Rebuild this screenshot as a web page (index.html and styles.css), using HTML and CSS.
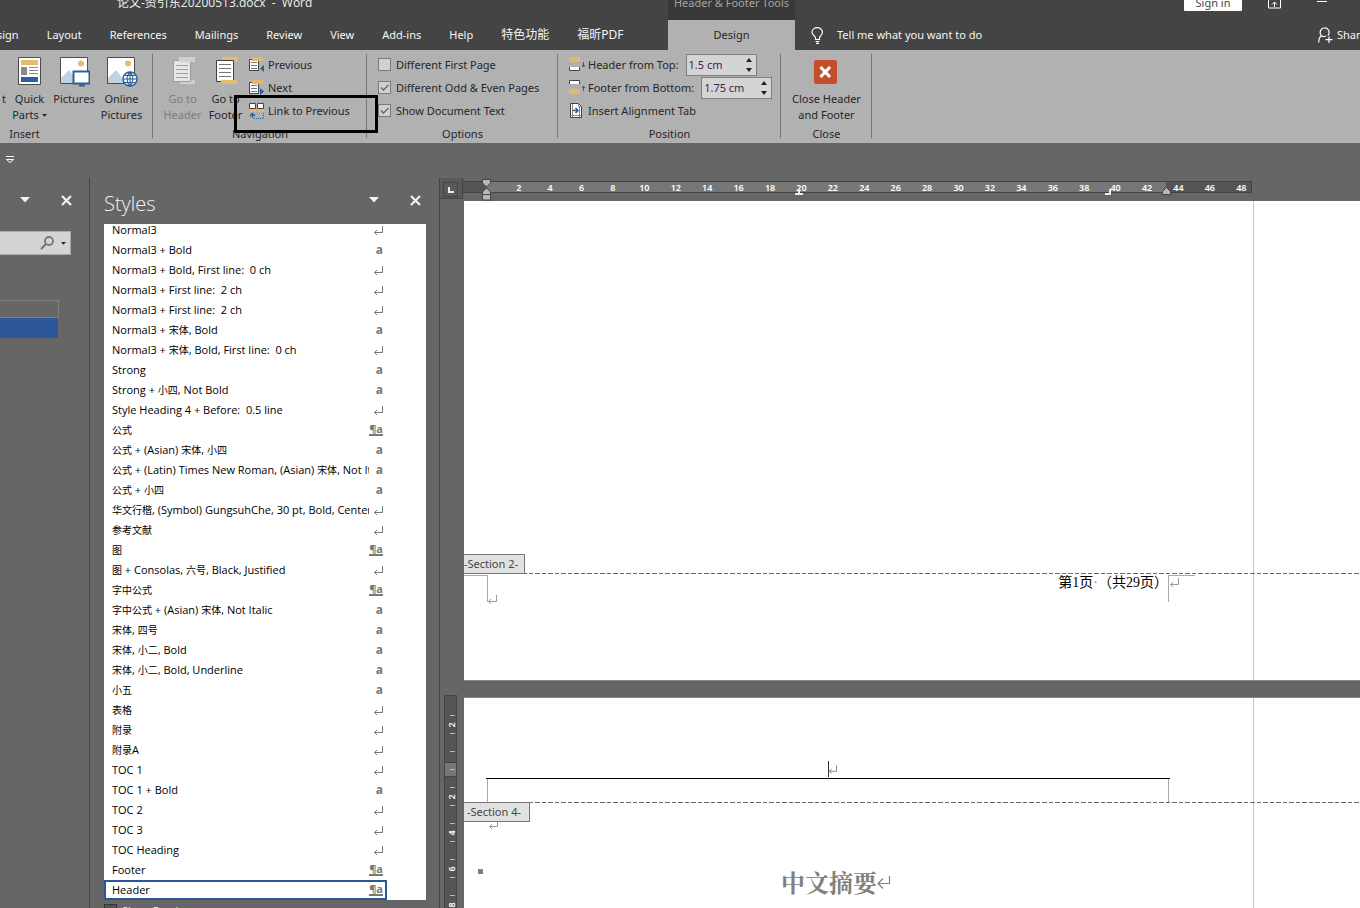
FILE: index.html
```
<!DOCTYPE html>
<html lang="en">
<head>
<meta charset="utf-8">
<title>论文-资引东20200513.docx - Word</title>
<link rel="stylesheet" href="styles.css">
</head>
<body>
<svg class="defs" aria-hidden="true">
  <symbol id="ret" viewBox="0 0 10 9"><path d="M9.500 0v6.500H1.500M4 4L1.500 6.500L4 9" fill="none" stroke="currentColor"/></symbol>
  <symbol id="down" viewBox="0 0 10 6"><path d="M0 0h10L5 5.500z" fill="currentColor"/></symbol>
  <symbol id="cross" viewBox="0 0 11 11"><path d="M1 1l9 9M10 1l-9 9" fill="none" stroke="currentColor" stroke-width="2.200"/></symbol>
</svg>

<header class="titlebar">
  <div class="doc-title">论文-资引东20200513.docx&nbsp; -&nbsp; Word</div>
  <div class="tools-title">Header &amp; Footer Tools</div>
  <div class="window-controls">
    <button class="sign-in">Sign in</button>
    <button class="win-btn" aria-label="Ribbon display options"><svg width="14" height="12" viewBox="0 0 14 12"><path d="M.5.5h12v10.500H.5zM.5 2.500h12M6.500 10V5M4 7.500L6.500 5L9 7.500" fill="none" stroke="#fff"/></svg></button>
    <button class="win-btn" aria-label="Minimize"><svg width="10" height="6" viewBox="0 0 10 6"><path d="M0 1.500h10" stroke="#fff"/></svg></button>
  </div>
</header>

<nav class="tabs">
  <button class="tab tab-cut">sign</button>
  <button class="tab">Layout</button>
  <button class="tab">References</button>
  <button class="tab">Mailings</button>
  <button class="tab">Review</button>
  <button class="tab">View</button>
  <button class="tab">Add-ins</button>
  <button class="tab">Help</button>
  <button class="tab tab-zh">特色功能</button>
  <button class="tab tab-zh">福昕PDF</button>
  <button class="tab tab-active">Design</button>
  <button class="tell-me"><svg width="13" height="17" viewBox="0 0 13 17"><path d="M4.500 12.500V11C4.500 9 1 8 1 5.200C1 2.500 3.500.7 6.200.7S11.500 2.500 11.500 5.200C11.500 8 8.500 9 8.500 11v1.500zM4.500 14.500h4M5 16.300h3" fill="none" stroke="#fff" stroke-width="1.200"/></svg>Tell me what you want to do</button>
  <button class="share"><svg width="15" height="17" viewBox="0 0 15 17"><path d="M6.500 1a4 4.500 0 0 0-3 7.800C1.500 10 .8 12 .8 15.500M3.500 8.800c1.500 1 3.500 1 5-.2M6.500 1a4 4.500 0 0 1 3.500 7.500M11 9.500v6.500M7.500 12.700h7" fill="none" stroke="#fff" stroke-width="1.200"/></svg>Share</button>
</nav>

<section class="ribbon">
  <div class="group group-insert">
    <div class="group-body">
      <button class="big cut-btn">t</button>
      <button class="big quick"><svg width="32" height="32" viewBox="0 0 32 32"><path d="M4.500 2.500h22v27h-22z" fill="#fff" stroke="#4d4d4d"/><path d="M7 5h17v5H7z" fill="#e5bb6c"/><path d="M7 12h6v8H7z" fill="#8a8a8a"/><path d="M15 12.500h9M15 15.500h9M15 18.500h9" stroke="#8a8a8a"/><path d="M7 22h17v5H7z" fill="#2a6099"/></svg><span>Quick</span><span class="with-arrow">Parts<svg width="5" height="3" viewBox="0 0 10 6"><use href="#down"/></svg></span></button>
      <button class="big pics"><svg width="32" height="32" viewBox="0 0 32 32"><path d="M2.500 2.500h27v26h-27z" fill="#fff" stroke="#4d4d4d"/><path d="M3 28V23l8-8 10 13z" fill="#bfd2e8"/><circle cx="23" cy="8.500" r="3" fill="#e5bb6c"/><path d="M15.500 16.500h16v12h-16z" fill="#fff" stroke="#2a6099" stroke-width="2"/><path d="M21 30.500h6M24 28v3" stroke="#2a6099" stroke-width="2"/></svg><span>Pictures</span></button>
      <button class="big online"><svg width="32" height="32" viewBox="0 0 32 32"><path d="M1.500 2.500h27v26h-27z" fill="#fff" stroke="#4d4d4d"/><path d="M2 28V23l8-8 10 13z" fill="#bfd2e8"/><circle cx="22" cy="8.500" r="3" fill="#e5bb6c"/><circle cx="24" cy="24" r="7" fill="#fff" stroke="#2a6099" stroke-width="1.500"/><path d="M17 24h14M18 20.500h12M18 27.500h12M24 17v14M24 17c-4 4-4 10 0 14M24 17c4 4 4 10 0 14" fill="none" stroke="#2a6099" stroke-width="1.100"/></svg><span>Online</span><span>Pictures</span></button>
    </div>
    <div class="group-name">Insert</div>
  </div>

  <div class="group group-nav">
    <div class="group-body">
      <button class="big goto" disabled><svg width="32" height="32" viewBox="0 0 32 32"><path d="M13 25h15v4H13z" fill="#cfcfcf"/><path d="M6.500 5.500h17v21h-17z" fill="#e6e6e6" stroke="#9c9c9c"/><path d="M12 2h16v5H12z" fill="#cfcfcf"/><path d="M9 10.500h12M9 14.500h12M9 18.500h12M9 22.500h12" stroke="#a0a0a0"/></svg><span>Go to</span><span>Header</span></button>
      <button class="big goto"><svg width="32" height="32" viewBox="0 0 32 32"><path d="M12 2h16v5H12z" fill="#e5bb6c"/><path d="M6.500 5.500h17v21h-17z" fill="#fff" stroke="#3f3f3f"/><path d="M9 9.500h12M9 13.500h12M9 17.500h12M9 21.500h12" stroke="#777"/><path d="M11 25h16v4H11z" fill="#e5bb6c"/></svg><span>Go to</span><span>Footer</span></button>
      <div class="stack">
        <button class="small"><svg width="16" height="16" viewBox="0 0 16 16"><path d="M.5 2.500h9v11h-9z" fill="#fff" stroke="#444"/><path d="M2 5.500h6M2 8.500h6M2 11.500h6" stroke="#777"/><path d="M3 0h11v4H3z" fill="#e5b76b"/><path d="M15 8v7l-4-3.500z" fill="#2a6099"/></svg>Previous</button>
        <button class="small"><svg width="16" height="16" viewBox="0 0 16 16"><path d="M.5 2.500h9v11h-9z" fill="#fff" stroke="#444"/><path d="M2 5.500h6M2 8.500h6M2 11.500h6" stroke="#777"/><path d="M3 0h11v4H3z" fill="#e5b76b"/><path d="M11 8v7l4-3.500z" fill="#2a6099"/></svg>Next</button>
        <button class="small"><svg width="16" height="16" viewBox="0 0 16 16"><path d="M.5.5h6v5h-6zM8.500.5h6v5h-6z" fill="#fff" stroke="#444"/><path d="M0 6h7v3H0zM8 6h7v3H8z" fill="#e5b76b"/><path d="M3.500 15v-4M1 13l2.500-2.500L6 13" fill="none" stroke="#2a6099" stroke-width="1.400"/><path d="M5 15.500h9.500V10" fill="none" stroke="#2a6099" stroke-dasharray="1 1"/></svg>Link to Previous</button>
      </div>
    </div>
    <div class="group-name">Navigation</div>
    <div class="highlight"></div>
  </div>

  <div class="group group-options">
    <div class="group-body stack">
      <label class="small"><input type="checkbox">Different First Page</label>
      <label class="small"><input type="checkbox" checked>Different Odd &amp; Even Pages</label>
      <label class="small"><input type="checkbox" checked>Show Document Text</label>
    </div>
    <div class="group-name">Options</div>
  </div>

  <div class="group group-position">
    <div class="group-body stack">
      <div class="small"><svg width="16" height="16" viewBox="0 0 16 16"><path d="M0 0h11v5H0z" fill="#e5b76b"/><path d="M0 6.500h11M0 8.500h11" stroke="#d0a860" stroke-dasharray="1 1"/><path d="M.5 10v3.500h10V10" fill="#fff" stroke="#444"/><path d="M14.500 5v5M13 8l1.500 2L16 8" fill="none" stroke="#2a6099"/></svg><label for="top">Header from Top:</label>
        <span class="spin"><input id="top" type="text" value="1.5 cm"><svg width="6" height="14" viewBox="0 0 6 14"><path d="M0 4h6L3 0zM0 10h6L3 14z" fill="#222"/></svg></span></div>
      <div class="small"><svg width="16" height="16" viewBox="0 0 16 16"><path d="M.5 4V.5h10V4" fill="#fff" stroke="#444"/><path d="M0 5.500h11M0 7.500h11" stroke="#d0a860" stroke-dasharray="1 1"/><path d="M0 9h11v5H0z" fill="#e5b76b"/><path d="M14.500 11V6M13 8l1.500-2L16 8" fill="none" stroke="#2a6099"/></svg><label for="bottom">Footer from Bottom:</label>
        <span class="spin"><input id="bottom" type="text" value="1.75 cm"><svg width="6" height="14" viewBox="0 0 6 14"><path d="M0 4h6L3 0zM0 10h6L3 14z" fill="#222"/></svg></span></div>
      <button class="small"><svg width="16" height="16" viewBox="0 0 16 16"><path d="M1.500.5h8l3 3v11h-11z" fill="#fff" stroke="#444"/><path d="M9.500.5v3h3M3.500 1v13M10.500 4v10M2 12.500h10" fill="none" stroke="#888"/><path d="M4 7.500h5M6.500 5l2.500 2.500L6.500 10" fill="none" stroke="#2a6099" stroke-width="1.600"/></svg>Insert Alignment Tab</button>
    </div>
    <div class="group-name">Position</div>
  </div>

  <div class="group group-close">
    <div class="group-body">
      <button class="big close-hf"><svg width="32" height="32" viewBox="0 0 32 32"><rect x="3" y="5" width="23" height="24" rx="2" fill="#c44d2d"/><path d="M9.500 12l9.500 10M19 12l-9.500 10" stroke="#fff" stroke-width="3.200"/></svg><span>Close Header</span><span>and Footer</span></button>
    </div>
    <div class="group-name">Close</div>
  </div>
</section>

<div class="quick-access"><button aria-label="Customize"><svg width="8" height="8" viewBox="0 0 8 8"><path d="M0 .5h8M.5 3.500L4 6.500l3.500-3H.5" fill="none" stroke="#fff"/></svg></button></div>

<main class="workspace">
  <aside class="nav-pane">
    <div class="pane-head">
      <button aria-label="Options"><svg width="10" height="6"><use href="#down"/></svg></button>
      <button aria-label="Close"><svg width="11" height="11"><use href="#cross"/></svg></button>
    </div>
    <div class="search"><input type="text" aria-label="Search document">
      <svg width="15" height="14" viewBox="0 0 15 14"><circle cx="9" cy="5" r="4" fill="none" stroke="#777" stroke-width="1.800"/><path d="M6 8L1 13" stroke="#777" stroke-width="2.200"/></svg>
      <svg class="tiny" width="5" height="3"><use href="#down"/></svg></div>
    <div class="nav-row"></div>
    <div class="nav-row nav-selected"></div>
  </aside>

  <aside class="styles-pane">
    <div class="pane-head">
      <h2>Styles</h2>
      <button aria-label="Options"><svg width="10" height="6"><use href="#down"/></svg></button>
      <button aria-label="Close"><svg width="11" height="11"><use href="#cross"/></svg></button>
    </div>
    <div class="list-box">
      <ul class="list">
        <li><span class="name">Normal3</span><svg class="ret"><use href="#ret"/></svg></li>
        <li><span class="name">Normal3 + Bold</span><b>a</b></li>
        <li><span class="name">Normal3 + Bold, First line:  0 ch</span><svg class="ret"><use href="#ret"/></svg></li>
        <li><span class="name">Normal3 + First line:  2 ch</span><svg class="ret"><use href="#ret"/></svg></li>
        <li><span class="name">Normal3 + First line:  2 ch</span><svg class="ret"><use href="#ret"/></svg></li>
        <li><span class="name">Normal3 + <span class="zh">宋体</span>, Bold</span><b>a</b></li>
        <li><span class="name">Normal3 + <span class="zh">宋体</span>, Bold, First line:  0 ch</span><svg class="ret"><use href="#ret"/></svg></li>
        <li><span class="name">Strong</span><b>a</b></li>
        <li><span class="name">Strong + <span class="zh">小四</span>, Not Bold</span><b>a</b></li>
        <li><span class="name">Style Heading 4 + Before:  0.5 line</span><svg class="ret"><use href="#ret"/></svg></li>
        <li><span class="name"><span class="zh">公式</span></span><b class="linked">¶a</b></li>
        <li><span class="name"><span class="zh">公式</span> + (Asian) <span class="zh">宋体</span>, <span class="zh">小四</span></span><b>a</b></li>
        <li><span class="name"><span class="zh">公式</span> + (Latin) Times New Roman, (Asian) <span class="zh">宋体</span>, Not Ita</span><b>a</b></li>
        <li><span class="name"><span class="zh">公式</span> + <span class="zh">小四</span></span><b>a</b></li>
        <li><span class="name"><span class="zh">华文行楷</span>, (Symbol) GungsuhChe, 30 pt, Bold, Centered</span><svg class="ret"><use href="#ret"/></svg></li>
        <li><span class="name"><span class="zh">参考文献</span></span><svg class="ret"><use href="#ret"/></svg></li>
        <li><span class="name"><span class="zh">图</span></span><b class="linked">¶a</b></li>
        <li><span class="name"><span class="zh">图</span> + Consolas, <span class="zh">六号</span>, Black, Justified</span><svg class="ret"><use href="#ret"/></svg></li>
        <li><span class="name"><span class="zh">字中公式</span></span><b class="linked">¶a</b></li>
        <li><span class="name"><span class="zh">字中公式</span> + (Asian) <span class="zh">宋体</span>, Not Italic</span><b>a</b></li>
        <li><span class="name"><span class="zh">宋体</span>, <span class="zh">四号</span></span><b>a</b></li>
        <li><span class="name"><span class="zh">宋体</span>, <span class="zh">小二</span>, Bold</span><b>a</b></li>
        <li><span class="name"><span class="zh">宋体</span>, <span class="zh">小二</span>, Bold, Underline</span><b>a</b></li>
        <li><span class="name"><span class="zh">小五</span></span><b>a</b></li>
        <li><span class="name"><span class="zh">表格</span></span><svg class="ret"><use href="#ret"/></svg></li>
        <li><span class="name"><span class="zh">附录</span></span><svg class="ret"><use href="#ret"/></svg></li>
        <li><span class="name"><span class="zh">附录</span>A</span><svg class="ret"><use href="#ret"/></svg></li>
        <li><span class="name">TOC 1</span><svg class="ret"><use href="#ret"/></svg></li>
        <li><span class="name">TOC 1 + Bold</span><b>a</b></li>
        <li><span class="name">TOC 2</span><svg class="ret"><use href="#ret"/></svg></li>
        <li><span class="name">TOC 3</span><svg class="ret"><use href="#ret"/></svg></li>
        <li><span class="name">TOC Heading</span><svg class="ret"><use href="#ret"/></svg></li>
        <li><span class="name">Footer</span><b class="linked">¶a</b></li>
        <li class="selected"><span class="name">Header</span><b class="linked">¶a</b></li>
      </ul>
    </div>
    <label class="preview"><input type="checkbox">Show Preview</label>
  </aside>

  <section class="document">
    <div class="ruler-row">
      <button class="tab-kind" aria-label="Tab type"><svg width="15" height="15" viewBox="0 0 15 15"><path d="M.5.5h14v14H.5z" fill="none" stroke="#444"/><path d="M6 5v5h5" fill="none" stroke="#e8e8e8" stroke-width="2"/></svg></button>
      <div class="ruler">
        <ol class="scale">
          <li>2</li><li>4</li><li>6</li><li>8</li><li>10</li><li>12</li><li>14</li><li>16</li><li>18</li><li>20</li><li>22</li><li>24</li><li>26</li><li>28</li><li>30</li><li>32</li><li>34</li><li>36</li><li>38</li><li>40</li><li>42</li><li>44</li><li>46</li><li>48</li>
        </ol>
        <svg class="mark mark-left" width="9" height="22" viewBox="0 0 9 22"><path d="M.5.5h8v3.500l-4 4-4-4zM4.500 9l4 4v2.500h-8V13zM.5 15.500h8v5.500h-8z" fill="#b8b8b8" stroke="#444"/></svg>
        <svg class="mark mark-center" width="8" height="6" viewBox="0 0 8 6"><path d="M0 5h8M4 0v5" stroke="#eee" stroke-width="2"/></svg>
        <svg class="mark mark-tab" width="6" height="6" viewBox="0 0 6 6"><path d="M0 5h5V0" fill="none" stroke="#eee" stroke-width="2"/></svg>
        <svg class="mark mark-right" width="9" height="8" viewBox="0 0 9 8"><path d="M4.500.5l4 4v3h-8v-3z" fill="#b8b8b8" stroke="#444"/></svg>
      </div>
    </div>
    <div class="canvas">
      <div class="v-ruler"><svg width="13" height="240" viewBox="0 0 13 240"><path d="M0 0h13v240H0z" fill="#555"/><path d="M.5 240V.5h12V240" fill="none" stroke="#444"/><path d="M.5 67.500h12v14H.5z" fill="#777" stroke="#444"/><path d="M6 20.500h5M6 38.500h5M6 56.500h5M6 74.500h5M6 92.500h5M6 110.500h5M6 128.500h5M6 146.500h5M6 164.500h5M6 182.500h5M6 200.500h5" stroke="#bbb"/>
        <g class="v-num"><text transform="translate(11 30) rotate(-90)">2</text><text transform="translate(11 102) rotate(-90)">2</text><text transform="translate(11 138) rotate(-90)">4</text><text transform="translate(11 174) rotate(-90)">6</text><text transform="translate(11 210) rotate(-90)">8</text></g></svg></div>
      <div class="pages">
        <article class="page page-first">
          <footer class="page-footer">
            <span class="section-tag tag-footer">-Section 2-</span>
            <span class="corner corner-left"><svg class="ret"><use href="#ret"/></svg></span>
            <p>第1页<span class="dot">·</span>（共29页）</p>
            <span class="corner corner-right"><svg class="ret"><use href="#ret"/></svg></span>
          </footer>
        </article>
        <article class="page page-second">
          <div class="page-header"><div class="header-line"><span class="caret"><svg class="ret"><use href="#ret"/></svg></span></div><div class="header-base"></div></div>
          <div class="page-body">
            <span class="section-tag tag-header">-Section 4-</span>
            <svg class="ret"><use href="#ret"/></svg>
            <div class="heading"><span class="bullet"></span><h1>中文摘要<svg width="14" height="13" viewBox="0 0 14 13"><path d="M12.500 0v7.500H1M6 2.500L1 7.500l5 5" fill="none" stroke="#808080" stroke-width="1.200"/></svg></h1></div>
          </div>
        </article>
      </div>
    </div>
  </section>
</main>
</body>
</html>
```
FILE: styles.css
```
* { box-sizing: border-box; }
body {
  margin: 0; height: 100vh; overflow: hidden;
  display: flex; flex-direction: column;
  background: #666; color: #262626;
  font: 11px/16px "Noto Sans", "Noto Sans CJK SC", sans-serif;
}
button, input { font: inherit; color: inherit; }
button { background: none; border: 0; padding: 0; margin: 0; }
svg { display: block; flex: none; }
.defs { position: absolute; width: 0; height: 0; }

.titlebar {
  flex: none; height: 34px; margin-top: -14px;
  display: flex; align-items: center;
  background: #444; color: #f0f0f0;
}
.doc-title { width: 668px; padding-left: 117px; font-size: 12px; font-family: "Open Sans", "Noto Sans CJK SC", sans-serif; }
.tools-title {
  width: 127px; height: 34px; line-height: 34px; text-align: center;
  background: #383838; color: #a3a3a3;
}
.window-controls { margin-left: auto; display: flex; align-items: center; gap: 26px; padding-right: 33px; }
.sign-in { width: 58px; height: 16px; background: #fff; color: #444; border-radius: 1px; line-height: 14px; }
.win-btn + .win-btn { margin-left: 9px; }

.tabs { flex: none; height: 30px; display: flex; background: #444; color: #f5f5f5; overflow: hidden; }
.tab { padding: 0 14px; flex: none; }
.tab-cut { padding-left: 0; margin-left: -3px; }
.tab-zh { font-size: 12px; }
.tab-active { margin-left: auto; width: 127px; background: #b1b1b1; color: #262626; }
.tell-me { width: 500px; padding-left: 16px; display: flex; align-items: center; gap: 13px; }
.share { width: 65px; padding-left: 23px; display: flex; align-items: center; gap: 4px; }

.ribbon { flex: none; height: 93px; display: flex; background: #b1b1b1; }
.group { position: relative; padding-top: 3px; display: flex; flex-direction: column; }
.group::after { content: ""; position: absolute; right: 0; top: 4px; height: 84px; width: 1px; background: #777; }
.group-body { flex: none; height: 73px; display: flex; }
.group-name { text-align: center; }
.group-insert { width: 153px; }
.group-insert .group-name { width: 49px; }
.group-nav { width: 214px; }
.group-nav .group-body { padding-left: 8px; }
.group-nav .stack { margin-left: 2px; }
.group-options { width: 191px; }
.group-options .group-body, .group-position .group-body { padding-left: 11px; }
.group-position { width: 223px; }
.group-close { width: 91px; }
.big { display: flex; flex-direction: column; align-items: center; justify-content: flex-start; padding-top: 2px; line-height: 16px; white-space: nowrap; }
.big svg { margin-bottom: 4px; }
.big:disabled { color: #7c7c7c; }
.cut-btn { width: 8px; padding-top: 38px; }
.quick { width: 43px; }
.pics { width: 46px; }
.online { width: 49px; }
.big .with-arrow { display: flex; align-items: center; gap: 3px; }
.big .with-arrow svg { margin: 0; }
.goto { width: 43px; }
.close-hf { width: 91px; }
.stack { display: flex; flex-direction: column; }
.small { height: 23px; display: flex; align-items: center; gap: 3px; white-space: nowrap; }
.group-options .small { gap: 5px; }
input[type="checkbox"] {
  appearance: none; flex: none; width: 13px; height: 13px; margin: 0;
  background: #d0d0d0; border: 1px solid #7a7a7a;
}
input[type="checkbox"]:checked {
  background: #d0d0d0 url("data:image/svg+xml,%3Csvg xmlns='http://www.w3.org/2000/svg' viewBox='0 0 11 11'%3E%3Cpath d='M2 5.500l2.500 2.500L9.500 3' fill='none' stroke='%23666' stroke-width='1.300'/%3E%3C/svg%3E");
}
.spin { display: flex; align-items: center; width: 71px; height: 22px; margin-left: 4px; background: #d4d4d4; border: 1px solid #808080; }
.spin input { width: 59px; height: 20px; padding: 0 2px; border: 0; background: none; color: #3a2450; }
.highlight { position: absolute; left: 81px; top: 45px; width: 144px; height: 38px; border: 3px solid #000; z-index: 2; }

.quick-access { flex: none; height: 35px; padding: 13px 0 0 6px; display: flex; align-items: flex-start; }

.workspace { flex: 1; min-height: 0; display: flex; }
.nav-pane { width: 90px; border-right: 1px solid #444; }
.pane-head { flex: none; display: flex; align-items: center; height: 46px; color: #f2f2f2; padding-right: 10px; }
.pane-head button { padding-bottom: 2px; }
.pane-head button + button { margin-left: 31px; }
.nav-pane .pane-head { padding: 0 0 0 20px; }
.search { width: 71px; height: 24px; margin-top: 7px; display: flex; align-items: center; background: #d4d4d4; border: 1px solid #aaa; border-left: 0; }
.search input { width: 40px; height: 20px; border: 0; padding: 0; background: none; }
.search .tiny { margin-left: 6px; }
.nav-row { width: 59px; height: 18px; border: 1px solid #808080; border-left: 0; }
.search + .nav-row { margin-top: 45px; }
.nav-selected { width: 58px; height: 20px; border: 0; background: #2b579a; }

.styles-pane { width: 350px; padding: 0 13px 0 14px; border-right: 1px solid #444; display: flex; flex-direction: column; font-family: "Open Sans", "Noto Sans CJK SC", sans-serif; }
.styles-pane .pane-head { padding-right: 5px; }
.pane-head h2 { margin: 6px auto 0 0; font-size: 20px; line-height: 28px; font-weight: 300; }
.list-box { flex: none; height: 676px; background: #fff; overflow: hidden; display: flex; flex-direction: column; justify-content: flex-end; }
.list { list-style: none; margin: 0; padding: 0; width: 283px; color: #000; }
.list li { height: 20px; padding: 0 4px 0 8px; display: flex; align-items: center; justify-content: space-between; color: #777; line-height: 20px; }
.list .name { width: 257px; overflow: hidden; white-space: pre; color: #000; }
.list b { font-size: 12px; }
.list .linked { font-size: 11px; line-height: 10px; border-bottom: 2px solid #777; }
.list .selected { outline: 2px solid #2b579a; outline-offset: -2px; }
.zh { font-size: 10px; }
.ret { width: 10px; height: 9px; color: #777; }
.preview { display: flex; align-items: flex-start; gap: 5px; margin-top: 4px; color: #f0f0f0; line-height: 14px; }
.preview input[type="checkbox"] { background: #555; border-color: #333; }

.document { flex: 1; min-width: 0; display: flex; flex-direction: column; }
.ruler-row { flex: none; height: 22px; display: flex; }
.tab-kind { width: 23px; height: 21px; padding: 2px 0 0 3px; background: #5a5a5a; border-right: 1px solid #444; border-bottom: 1px solid #444; }
.ruler {
  position: relative; width: 789px; height: 12px; margin-top: 3px;
  border: 1px solid #444; border-left: 0;
  background: linear-gradient(90deg, #555 24px, #777 24px 703px, #555 703px);
}
.scale {
  list-style: none; display: grid; grid-template-columns: repeat(24, 1fr);
  margin: 0 -6px 0 40px; padding: 0; color: #fff; text-align: center;
  font-size: 9px; line-height: 11px; font-weight: 600;
}
.mark { position: absolute; }
.mark-left { left: 19px; top: -3px; }
.mark-center { left: 332px; top: 7px; }
.mark-tab { left: 642px; top: 7px; }
.mark-right { left: 699px; top: 5px; }

.canvas { flex: 1; min-height: 0; display: flex; }
.v-ruler { width: 24px; padding: 495px 0 0 4px; }
.v-num { fill: #fff; font-size: 9px; font-weight: 600; text-anchor: middle; }
.pages { flex: 1; min-width: 0; display: flex; flex-direction: column; gap: 16px; padding-top: 1px; }
.page { position: relative; background: linear-gradient(#c6c6c6, #c6c6c6) 789px 0 / 1px 100% no-repeat #fff; }
.page-first { flex: none; height: 480px; display: flex; flex-direction: column; justify-content: flex-end; border-bottom: 1px solid #888; }
.page-footer, .page-body {
  position: relative;
  background: repeating-linear-gradient(90deg, #6b6b6b 0 4px, transparent 4px 6px, #6b6b6b 6px 11px, transparent 11px 13px) 0 0 / 100% 1px no-repeat;
}
.page-footer { height: 107px; padding-top: 2px; display: flex; }
.section-tag { position: absolute; left: 0; background: #e1e1e1; border: 1px solid #777; border-left: 0; line-height: 18px; height: 20px; color: #444; }
.tag-footer { top: -19px; width: 61px; }
.tag-header { top: 0; width: 66px; padding-left: 3px; }
.corner { height: 27px; border-top: 1px solid #aaa; }
.corner-left { width: 24px; border-right: 1px solid #aaa; }
.corner-left .ret { margin: 19px 0 0 23px; color: #999; }
.page-footer p { width: 680px; margin: 0; text-align: right; font: 14px/16px "Liberation Serif", "Noto Sans CJK SC", serif; color: #000; text-spacing-trim: space-all; }
.dot { color: #888; }
.corner-right { width: 27px; border-left: 1px solid #aaa; }
.corner-right .ret { margin-top: 2px; color: #999; }
.page-second { flex: 1; border-top: 1px solid #888; }
.page-header { padding: 63px 0 0 22px; }
.header-line { width: 684px; height: 18px; border-bottom: 1px solid #000; display: flex; justify-content: center; }
.caret { width: 1px; height: 16px; background: #333; }
.caret .ret { margin: 4px 0 0 0; width: 9px; }
.header-base { width: 682px; height: 23px; margin-left: 1px; border: 1px solid #aaa; border-width: 0 1px; }
.page-body .ret { margin-left: 24px; color: #999; }
.page-body { padding-top: 18px; }
.heading { display: flex; align-items: center; margin-top: 35px; padding-left: 14px; }
.bullet { width: 5px; height: 5px; margin-bottom: 22px; background: #808080; }
h1 { margin: 0; width: 706px; display: flex; justify-content: center; align-items: center; font: bold 24px/36px "Noto Serif CJK SC", "Noto Sans CJK SC", serif; color: #808080; }
```
